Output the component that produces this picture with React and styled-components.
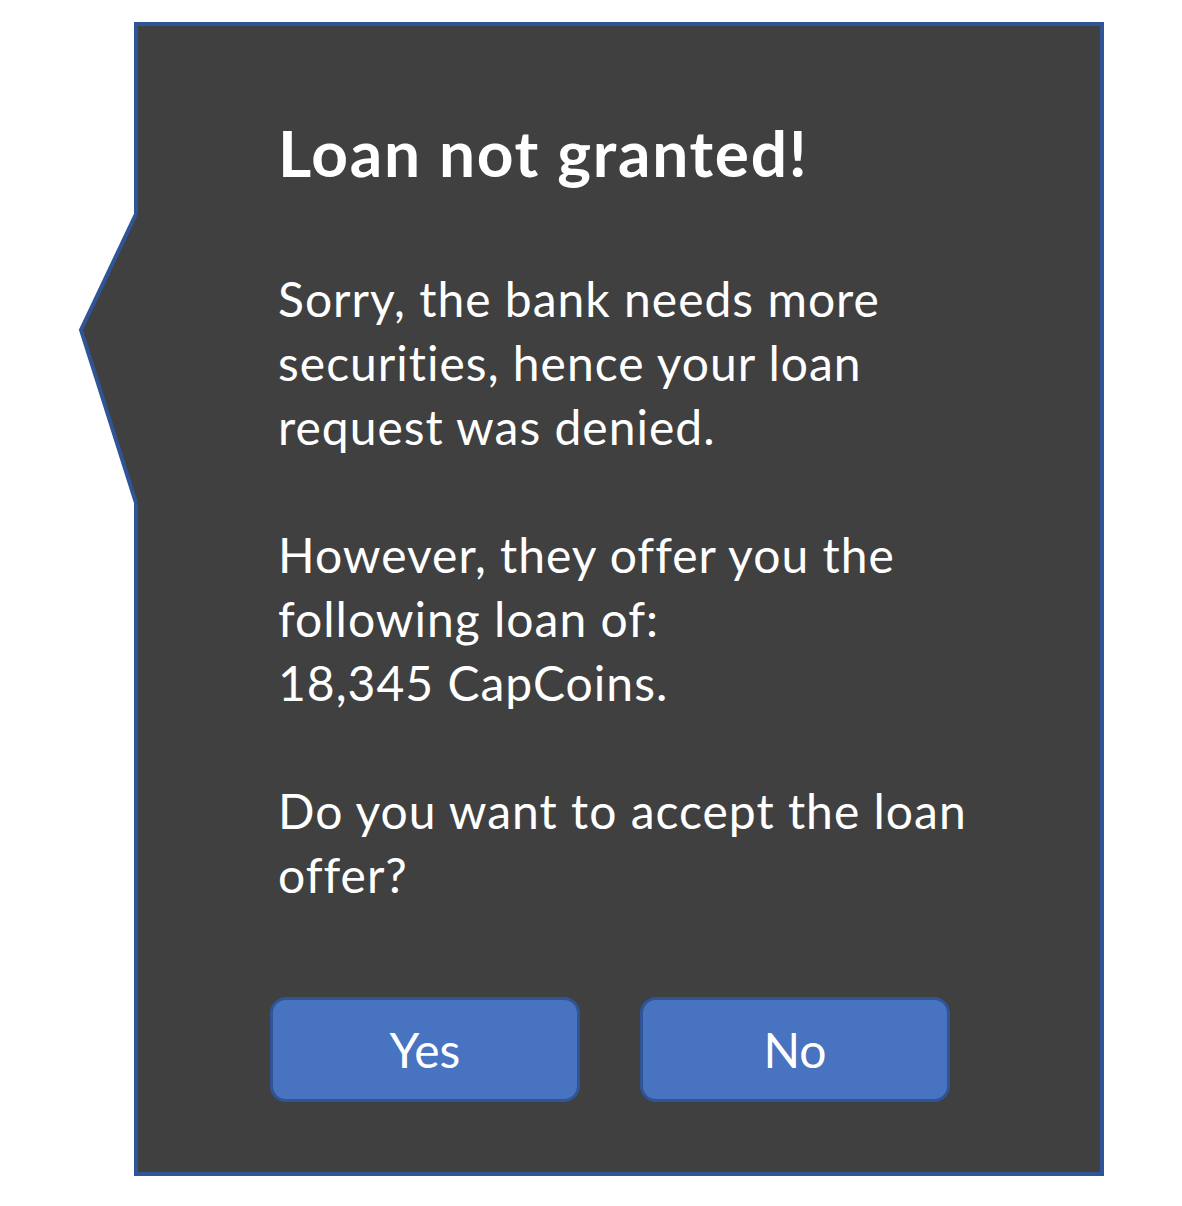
import React from 'react'
import styled, { createGlobalStyle } from 'styled-components'

const GlobalStyle = createGlobalStyle`
  html, body {
    margin: 0;
    padding: 0;
    background: #ffffff;
  }
  body {
    font-family: Lato, "Open Sans", "Liberation Sans", sans-serif;
    font-variant-ligatures: none;
  }
`

const lines = [
  ['Sorry, the bank needs more', 'securities, hence your loan', 'request was denied.'],
  ['However, they offer you the', 'following loan of:', '18,345 CapCoins.'],
  ['Do you want to accept the loan', 'offer?'],
]

const App = () => (
  <Page>
    <GlobalStyle />
    <Callout>
      <Pointer width="66" height="320" viewBox="0 0 66 320">
        <polygon points="64,12 60,14 5,130 60,303 64,305" fill="#404040" />
        <polyline
          points="60,14 5,130 60,303"
          fill="none"
          stroke="#2F5597"
          strokeWidth="4"
          strokeLinejoin="miter"
        />
      </Pointer>
      <Title>Loan not granted!</Title>
      <Body>
        {lines.map((para, i) => (
          <Paragraph key={i}>
            {para.map((line) => (
              <Line key={line}>{line}</Line>
            ))}
          </Paragraph>
        ))}
      </Body>
      <Actions>
        <Button>Yes</Button>
        <Button>No</Button>
      </Actions>
    </Callout>
  </Page>
)

export default App

const Page = styled.div`
  width: 1182px;
  height: 1206px;
  padding: 22px 0 0 134px;
  box-sizing: border-box;
`

const Callout = styled.section`
  position: relative;
  box-sizing: border-box;
  width: 970px;
  height: 1154px;
  background: #404040;
  border: 4px solid #2f5597;
  padding: 90px 0 0 140px;
  color: #ffffff;
`

const Pointer = styled.svg`
  position: absolute;
  left: -62px;
  top: 174px;
  display: block;
`

const Title = styled.h1`
  margin: 0;
  font-size: 64px;
  line-height: 74px;
  font-weight: 700;
  letter-spacing: 1.7px;
`

const Body = styled.div`
  margin-top: 77px;
  font-size: 48px;
  line-height: 64px;
  letter-spacing: 1px;
`

const Paragraph = styled.p`
  margin: 0 0 64px;

  &:last-child {
    margin-bottom: 0;
  }
`

const Line = styled.span`
  display: block;
  white-space: nowrap;
`

const Actions = styled.div`
  display: flex;
  gap: 60px;
  margin: 90px 0 0 -8px;
`

const Button = styled.button`
  box-sizing: border-box;
  width: 310px;
  height: 105px;
  background: #4773c0;
  border: 3px solid #2f5597;
  border-radius: 16px;
  color: #ffffff;
  font-family: Lato, "Open Sans", "Liberation Sans", sans-serif;
  font-size: 48px;
  padding: 0;
  cursor: pointer;
`
